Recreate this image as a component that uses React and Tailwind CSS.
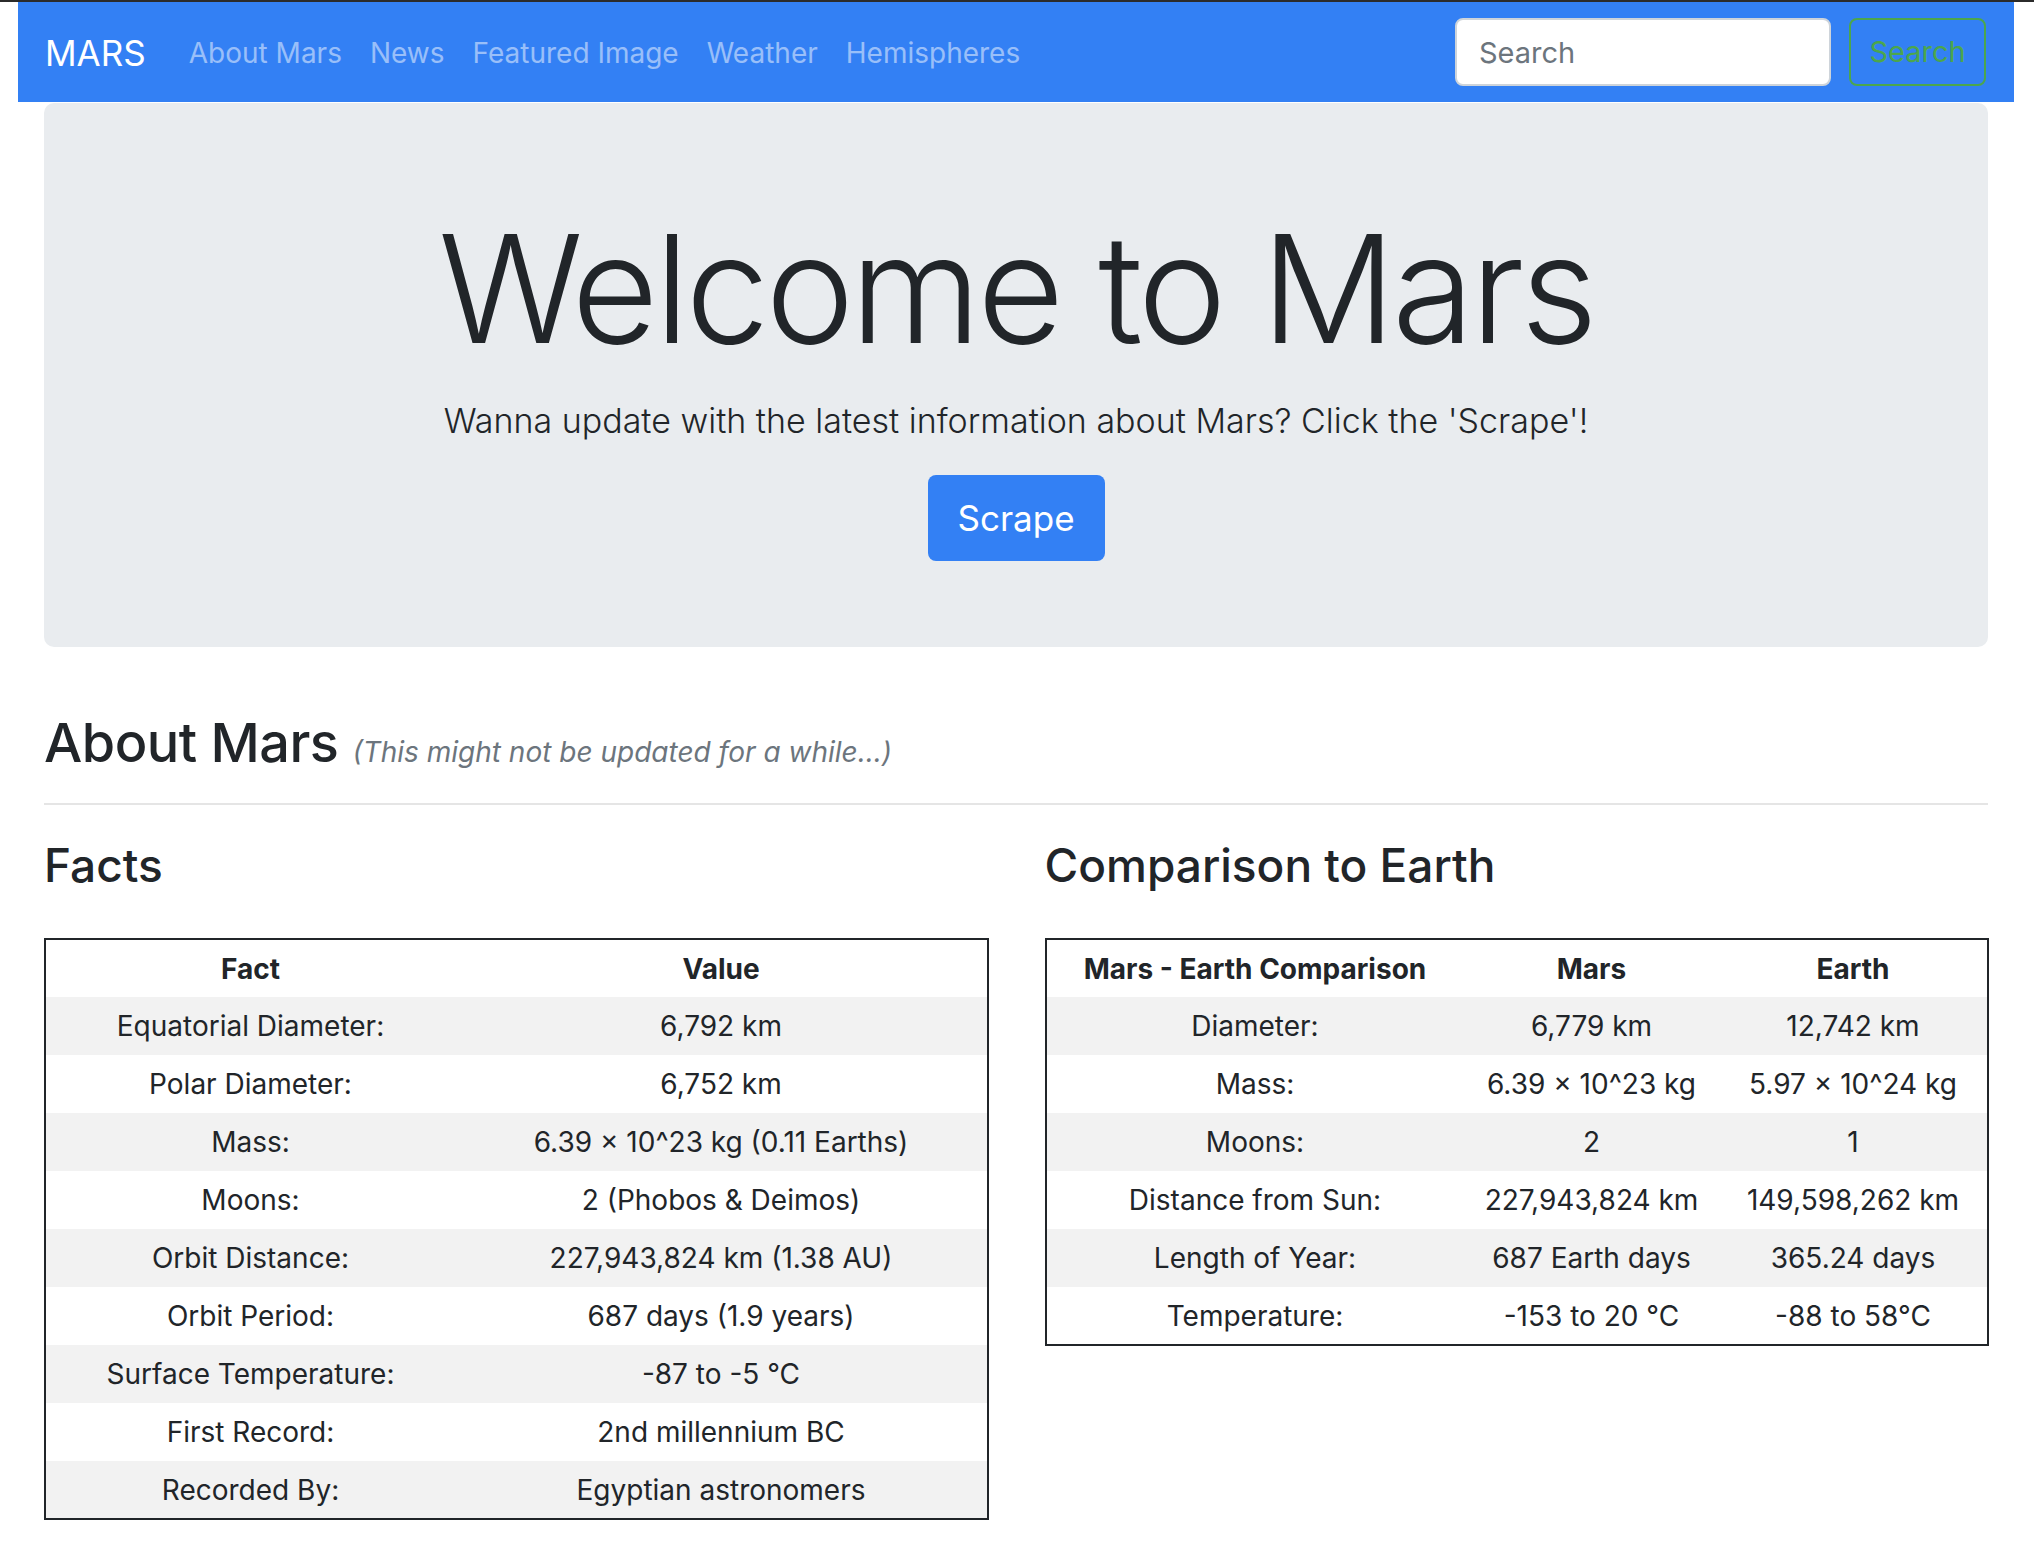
import { useState } from "react";

// static data for the two tables
const FACTS = [
  ["Equatorial Diameter:", "6,792 km"],
  ["Polar Diameter:", "6,752 km"],
  ["Mass:", "6.39 × 10^23 kg (0.11 Earths)"],
  ["Moons:", "2 (Phobos & Deimos)"],
  ["Orbit Distance:", "227,943,824 km (1.38 AU)"],
  ["Orbit Period:", "687 days (1.9 years)"],
  ["Surface Temperature:", "-87 to -5 °C"],
  ["First Record:", "2nd millennium BC"],
  ["Recorded By:", "Egyptian astronomers"],
];

const COMPARISON = [
  ["Diameter:", "6,779 km", "12,742 km"],
  ["Mass:", "6.39 × 10^23 kg", "5.97 × 10^24 kg"],
  ["Moons:", "2", "1"],
  ["Distance from Sun:", "227,943,824 km", "149,598,262 km"],
  ["Length of Year:", "687 Earth days", "365.24 days"],
  ["Temperature:", "-153 to 20 °C", "-88 to 58°C"],
];

const NAV = ["About Mars", "News", "Featured Image", "Weather", "Hemispheres"];

function DataTable({ headers, rows, widths }) {
  return (
    <table className="w-full table-fixed border-collapse border-2 border-[#212529] text-[28px] text-[#212529]">
      <colgroup>
        {widths.map((w, i) => (
          <col key={i} className={w} />
        ))}
      </colgroup>
      <thead>
        <tr className="h-[58px]">
          {headers.map((h) => (
            <th key={h} className="text-center font-bold leading-none">
              {h}
            </th>
          ))}
        </tr>
      </thead>
      <tbody>
        {rows.map((r, i) => (
          <tr key={i} className={i % 2 === 0 ? "h-[58px] bg-[#f2f2f2]" : "h-[58px] bg-white"}>
            {r.map((c, j) => (
              <td key={j} className="text-center leading-none">
                {c}
              </td>
            ))}
          </tr>
        ))}
      </tbody>
    </table>
  );
}

export default function App() {
  const [q, setQ] = useState("");

  return (
    <div
      className="min-h-screen bg-white border-t-2 border-[#2b2b2b] pl-[18px] pr-[20px] text-[#212529]"
      style={{ fontFamily: "Inter, 'Noto Sans', sans-serif" }}
    >
      {/* Navbar */}
      <nav className="h-[100px] bg-[#3380f4] flex items-center pl-[27px] pr-[28px]">
        <a href="#" className="text-white text-[35px] leading-none mr-[43px] pt-[2px]">
          MARS
        </a>
        <div className="flex items-center gap-[28px] pt-[2px]">
          {NAV.map((n) => (
            <a key={n} href="#" className="text-[28px] leading-none text-white/50">
              {n}
            </a>
          ))}
        </div>
        <div className="ml-auto flex items-center gap-[18px]">
          <input
            value={q}
            onChange={(e) => setQ(e.target.value)}
            placeholder="Search"
            className="w-[376px] h-[68px] rounded-[8px] bg-white border-2 border-[#ced4da] px-[22px] text-[29px] placeholder-[#6c757d] outline-none"
          />
          <button className="w-[137px] h-[68px] rounded-[8px] border-2 border-[#4ca64c] text-[#4ca64c] text-[29px]">
            Search
          </button>
        </div>
      </nav>

      <main className="px-[26px] pt-px">
        {/* Jumbotron */}
        <section className="bg-[#e9ecef] rounded-[10px] pt-[111px] pb-[86px] flex flex-col items-center">
          <h1 className="text-[150px] font-light leading-none tracking-[-4px]">Welcome to Mars</h1>
          <p className="mt-[40px] text-[34px] font-light leading-none">
            Wanna update with the latest information about Mars? Click the 'Scrape'!
          </p>
          <button className="mt-[37px] h-[86px] w-[177px] rounded-[8px] bg-[#3380f4] text-white text-[35px]">
            Scrape
          </button>
        </section>

        {/* About */}
        <div className="mt-[69px] flex items-baseline">
          <h2 className="text-[54px] font-medium leading-none tracking-[-0.5px]">About Mars</h2>
          <span className="ml-[14px] text-[28px] italic text-[#6c757d]">
            (This might not be updated for a while...)
          </span>
        </div>
        <hr className="mt-[30px] border-0 h-[2px] bg-[#e5e5e5]" />

        <div className="grid grid-cols-2 gap-[57px]">
          <div>
            <h3 className="mt-[37px] text-[46px] font-medium leading-none">Facts</h3>
            <div className="mt-[50px]">
              <DataTable
                headers={["Fact", "Value"]}
                rows={FACTS}
                widths={["w-[410px]", "w-[533px]"]}
              />
            </div>
          </div>
          <div>
            <h3 className="mt-[37px] text-[46px] font-medium leading-none">Comparison to Earth</h3>
            <div className="mt-[50px]">
              <DataTable
                headers={["Mars - Earth Comparison", "Mars", "Earth"]}
                rows={COMPARISON}
                widths={["w-[418px]", "w-[256px]", "w-[268px]"]}
              />
            </div>
          </div>
        </div>
      </main>
    </div>
  );
}
